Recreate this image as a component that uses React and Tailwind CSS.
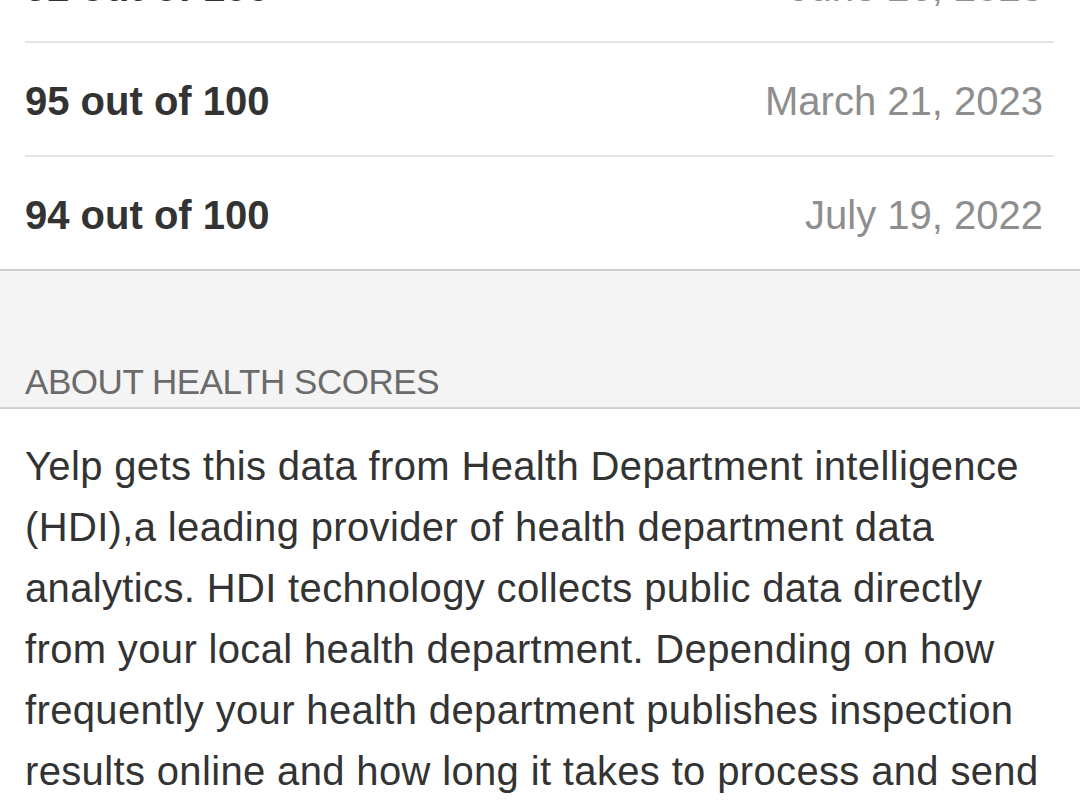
import React from "react";

const scores = [
  { score: "92 out of 100", date: "June 26, 2023" },
  { score: "95 out of 100", date: "March 21, 2023" },
  { score: "94 out of 100", date: "July 19, 2022" },
];

const aboutLines = [
  "Yelp gets this data from Health Department intelligence",
  "(HDI),a leading provider of health department data",
  "analytics. HDI technology collects public data directly",
  "from your local health department. Depending on how",
  "frequently your health department publishes inspection",
  "results online and how long it takes to process and send",
  "the data to Yelp, scores may not reflect the most recent",
];

const App = () => {
  return (
    <div className="w-[1080px] h-[808px] overflow-hidden bg-white font-['Liberation_Sans',Arial,sans-serif]">
      {/* Score history */}
      <div className="-mt-[71px] border-b-2 border-[#cdcdcd]">
        {scores.map((row, i) => {
          const last = i === scores.length - 1;
          return (
            <div key={row.score} className="pl-[25px]">
              <div
                className={
                  "flex items-center justify-between mr-[26px] pr-[11px] pt-[3px] " +
                  (last ? "h-[112px]" : "h-[114px] border-b-2 border-[#e4e4e4]")
                }
              >
                <span className="text-[40px] leading-none font-bold text-[#333333]">{row.score}</span>
                <span className="text-[40px] leading-none text-[#8e8e8e]">{row.date}</span>
              </div>
            </div>
          );
        })}
      </div>

      {/* Section header */}
      <div className="h-[138px] bg-[#f4f4f4] border-b-2 border-[#d2d2d2] flex items-end pl-[25px] pb-[8px]">
        <span className="text-[35px] leading-none tracking-[-0.45px] text-[#6b6b6b]">ABOUT HEALTH SCORES</span>
      </div>

      {/* About text */}
      <div className="pl-[25px] pt-[27px] text-[40px] leading-[61px] tracking-[0.35px] text-[#333333]">
        {aboutLines.map((line) => (
          <div key={line} className="whitespace-nowrap">{line}</div>
        ))}
      </div>
    </div>
  );
};

export default App;
